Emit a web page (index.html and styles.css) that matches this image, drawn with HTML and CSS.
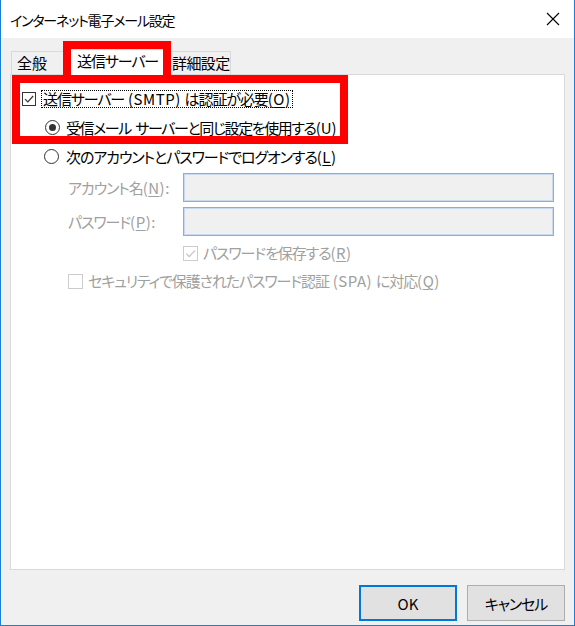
FILE: index.html
```html
<!DOCTYPE html>
<html lang="ja">
<head>
<meta charset="utf-8">
<title>インターネット電子メール設定</title>
<link rel="stylesheet" href="styles.css">
</head>
<body>
<div class="window">
  <div class="titlebar">
    <span class="title">インターネット電子メール設定</span>
    <svg class="close" width="14" height="14" viewBox="0 0 14 14"><path d="M1 1 L13 13 M13 1 L1 13" stroke="#000" stroke-width="1.1" fill="none"/></svg>
  </div>
  <div class="body">
    <div class="tabs">
      <div class="tab first">全般</div>
      <div class="tab selected">送信サーバー</div>
      <div class="tab last">詳細設定</div>
    </div>
    <div class="panel">
      <div class="row r1">
        <span class="cb"><svg width="12" height="12" viewBox="0 0 12 12"><path d="M2 6.2 L4.8 9 L10.2 3" stroke="#333" stroke-width="1.2" fill="none"/></svg></span>
        <span class="focus">送信サーバー<span class="lt"> (SMTP) </span>は認証が必要<span class="lt">(<u>O</u>)</span></span>
      </div>
      <div class="row r2">
        <span class="radio on"></span>
        <span class="txt">受信メール<span class="sp"> </span>サーバーと同じ設定を使用する<span class="lt">(<u>U</u>)</span></span>
      </div>
      <div class="row r3">
        <span class="radio"></span>
        <span class="txt">次のアカウントとパスワードでログオンする<span class="lt">(<u>L</u>)</span></span>
      </div>
      <div class="field f1">
        <span class="lbl">アカウント名<span class="lt">(<u>N</u>):</span></span>
        <span class="input"></span>
      </div>
      <div class="field f2">
        <span class="lbl">パスワード<span class="lt">(<u>P</u>):</span></span>
        <span class="input"></span>
      </div>
      <div class="row save dis">
        <span class="cb off"><svg width="13" height="13" viewBox="0 0 13 13"><path d="M2.2 6.6 L5.2 9.6 L11 3.4" stroke="#c4c4c4" stroke-width="1.2" fill="none"/></svg></span>
        <span class="txt">パスワードを保存する<span class="lt">(<u>R</u>)</span></span>
      </div>
      <div class="row spa dis">
        <span class="cb off"></span>
        <span class="txt">セキュリティで保護されたパスワード認証<span class="lt"> (SPA) </span>に対応<span class="lt">(<u>Q</u>)</span></span>
      </div>
    </div>
    <div class="buttons">
      <button class="btn default">OK</button>
      <button class="btn">キャンセル</button>
    </div>
  </div>
  <div class="hl hl-tab"></div>
  <div class="hl hl-box"></div>
</div>
</body>
</html>
```

FILE: styles.css
```css
* { box-sizing: border-box; }
html, body { margin: 0; padding: 0; background: #fff; }
body {
  font-family: "Noto Sans CJK JP", "Noto Sans", sans-serif;
  font-size: 15px;
  font-feature-settings: "palt";
  letter-spacing: -1.1px;
  color: #000;
}
.lt { letter-spacing: 0.5px; }
.sp { letter-spacing: 1px; }
u { text-decoration: underline; text-underline-offset: 2px; text-decoration-thickness: 1px; }

.window {
  position: relative;
  width: 575px;
  height: 626px;
  border: 1px solid #1a7fd6;
  border-top: none;
  background: #f0f0f0;
  display: flex;
  flex-direction: column;
  overflow: hidden;
}

.titlebar {
  height: 38px;
  flex: none;
  background: #fff;
  display: flex;
  align-items: center;
  justify-content: space-between;
  padding: 0 14px 0 9px;
}
.title { font-size: 14px; line-height: 20px; padding-top: 1px; letter-spacing: -1.2px; }
.close { display: block; }

.body {
  flex: 1;
  display: flex;
  flex-direction: column;
  padding: 0 9px 4px 9px;
}

.tabs {
  margin-top: 11px;
  height: 25px;
  display: flex;
  align-items: flex-end;
  position: relative;
  z-index: 1;
  padding-left: 1px;
}
.tab {
  height: 23px;
  border: 1px solid #d9d9d9;
  border-bottom: none;
  background: #f0f0f0;
  line-height: 21px;
  padding: 0 5px;
  white-space: nowrap;
}
.tab.first { width: 54px; letter-spacing: 0; }
.tab.selected {
  height: 26px;
  margin: 0 -2px -1px -2px;
  background: #fff;
  padding: 0 0 0 13px;
  width: 106px;
  line-height: 22px;
  position: relative;
  z-index: 2;
}
.tab.last { width: 64px; padding-left: 4px; letter-spacing: -0.6px; }

.panel {
  flex: 1;
  background: #fff;
  border: 1px solid #d9d9d9;
  padding-top: 9px;
  display: flex;
  flex-direction: column;
}

.row {
  height: 29px;
  display: flex;
  align-items: center;
  white-space: nowrap;
  line-height: 18px;
}
.r1 { padding-left: 11px; }
.r2 { padding-left: 34px; }
.r3 { padding-left: 33px; }

.cb {
  width: 14px;
  height: 14px;
  border: 1px solid #333;
  background: #fff;
  display: flex;
  align-items: center;
  justify-content: center;
  flex: none;
}
.cb.off { width: 15px; height: 15px; border-color: #cccccc; }

.focus {
  margin-left: 5px;
  padding: 0 2px 0 1px;
  border: 1px dotted #000;
  height: 18px;
  line-height: 16px;
}

.radio {
  width: 15px;
  height: 15px;
  border-radius: 50%;
  border: 1px solid #333;
  background: #fff;
  flex: none;
  position: relative;
}
.radio.on::after {
  content: "";
  position: absolute;
  left: 3px; top: 3px;
  width: 7px; height: 7px;
  border-radius: 50%;
  background: #333;
}
.row .txt { margin-left: 6px; }
.r2 .txt { letter-spacing: -1.4px; }
.r2 .lt { letter-spacing: 0; }
.r3 .txt { margin-left: 7px; }

.field {
  display: flex;
  align-items: center;
  height: 29px;
  padding-left: 57px;
  padding-right: 10px;
  color: #a0a0a0;
  white-space: nowrap;
}
.f1 { margin-top: 2px; }
.f2 { margin-top: 5px; }
.lbl { width: 115px; flex: none; }
.input {
  flex: 1;
  height: 29px;
  background: #f0f0f0;
  border: 1px solid #a4a9b0;
  box-shadow: inset 0 0 0 1px #c9daf0;
}

.dis { color: #a0a0a0; }
.save { margin-top: 3px; height: 28px; padding-left: 172px; }
.save .txt { margin-left: 5px; }
.spa { height: 28px; padding-left: 57px; }
.spa .txt { margin-left: 5px; }

.buttons {
  flex: none;
  display: flex;
  justify-content: flex-end;
  gap: 10px;
  margin-top: 15px;
  height: 36px;
}
.btn {
  width: 98px;
  height: 36px;
  font: inherit;
  font-feature-settings: "palt";
  letter-spacing: -1.1px;
  color: #000;
  background: #e1e1e1;
  border: 1px solid #adadad;
  padding: 0;
}
.btn.default { border: 2px solid #0078d7; letter-spacing: 0; }

.hl {
  position: absolute;
  border: 8px solid #ff0000;
  z-index: 5;
  pointer-events: none;
}
.hl-tab { left: 62px; top: 41px; width: 108px; height: 42px; border-bottom: none; }
.hl-box { left: 11px; top: 75px; width: 336px; height: 69px; }
```
